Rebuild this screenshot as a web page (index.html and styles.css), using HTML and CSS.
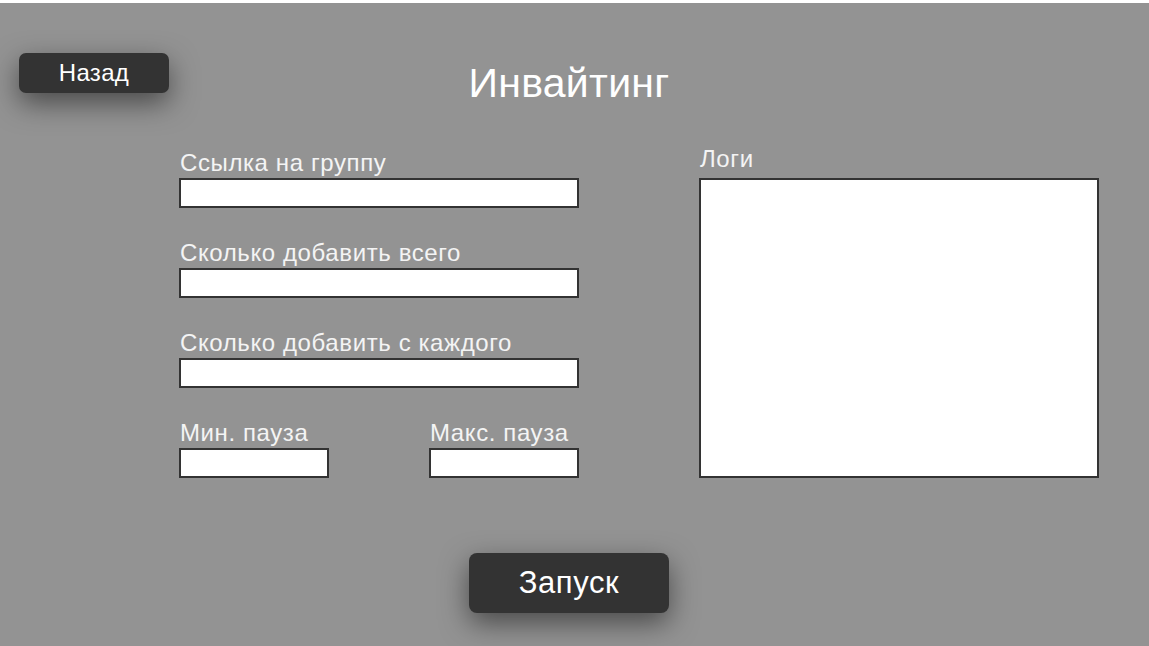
FILE: index.html
```html
<!DOCTYPE html>
<html lang="ru">
<head>
<meta charset="utf-8">
<title>Инвайтинг</title>
<link rel="stylesheet" href="styles.css">
</head>
<body>
<div class="screen">
  <header class="header">
    <button class="btn btn-back" type="button">Назад</button>
    <h1 class="title">Инвайтинг</h1>
    <div class="spacer"></div>
  </header>
  <main class="content">
    <section class="form">
      <div class="field">
        <label class="label">Ссылка на группу</label>
        <input class="input" type="text">
      </div>
      <div class="field">
        <label class="label">Сколько добавить всего</label>
        <input class="input" type="text">
      </div>
      <div class="field">
        <label class="label">Сколько добавить с каждого</label>
        <input class="input" type="text">
      </div>
      <div class="pair">
        <div class="field">
          <label class="label">Мин. пауза</label>
          <input class="input input-small" type="text">
        </div>
        <div class="field">
          <label class="label">Макс. пауза</label>
          <input class="input input-small" type="text">
        </div>
      </div>
    </section>
    <section class="logs">
      <label class="label label-logs">Логи</label>
      <textarea class="log-box"></textarea>
    </section>
  </main>
  <div class="actions">
    <button class="btn btn-start" type="button">Запуск</button>
  </div>
</div>
</body>
</html>
```
FILE: styles.css
```css
* { box-sizing: border-box; }
html, body {
  margin: 0;
  padding: 0;
  background: #ffffff;
}
body {
  font-family: "Liberation Sans", Arial, sans-serif;
  padding-top: 3px;
}
.screen {
  width: 1149px;
  height: 643px;
  background: #939393;
  overflow: hidden;
}
.header {
  width: 1138px;
  display: grid;
  grid-template-columns: 1fr auto 1fr;
  align-items: start;
  padding-top: 50px;
}
.btn {
  font-family: "Liberation Sans", Arial, sans-serif;
  background: #333333;
  color: #ffffff;
  border: none;
  box-shadow: 0 10px 28px rgba(0, 0, 0, 0.5);
  cursor: pointer;
}
.btn-back {
  justify-self: start;
  margin-left: 19px;
  width: 150px;
  height: 40px;
  border-radius: 7px;
  font-size: 24px;
  letter-spacing: 0.3px;
  padding: 0;
}
.title {
  margin: 7px 0 0;
  font-size: 41px;
  letter-spacing: 0.3px;
  line-height: 46px;
  font-weight: normal;
  color: #ffffff;
}
.content {
  display: flex;
  gap: 120px;
  padding-left: 179px;
  margin-top: 44px;
}
.form {
  width: 400px;
  display: flex;
  flex-direction: column;
  gap: 32px;
}
.field {
  display: flex;
  flex-direction: column;
  gap: 3px;
}
.label {
  display: block;
  font-size: 24px;
  letter-spacing: 0.6px;
  line-height: 25px;
  color: #f4f4f4;
  padding-left: 1px;
  white-space: nowrap;
}
.input {
  width: 400px;
  height: 30px;
  border: 2px solid #333333;
  background: #ffffff;
  margin: 0;
  padding: 0 4px;
  font-size: 16px;
  outline: none;
}
.input-small { width: 150px; }
.pair {
  display: flex;
  gap: 100px;
}
.logs {
  display: flex;
  flex-direction: column;
  gap: 7px;
  margin-top: -4px;
}
.log-box {
  width: 400px;
  height: 300px;
  border: 2px solid #333333;
  background: #ffffff;
  resize: none;
  margin: 0;
  outline: none;
}
.actions {
  width: 1138px;
  display: flex;
  justify-content: center;
  margin-top: 75px;
}
.btn-start {
  width: 200px;
  height: 60px;
  border-radius: 8px;
  font-size: 31px;
  letter-spacing: 0.6px;
  padding: 0;
}
```
